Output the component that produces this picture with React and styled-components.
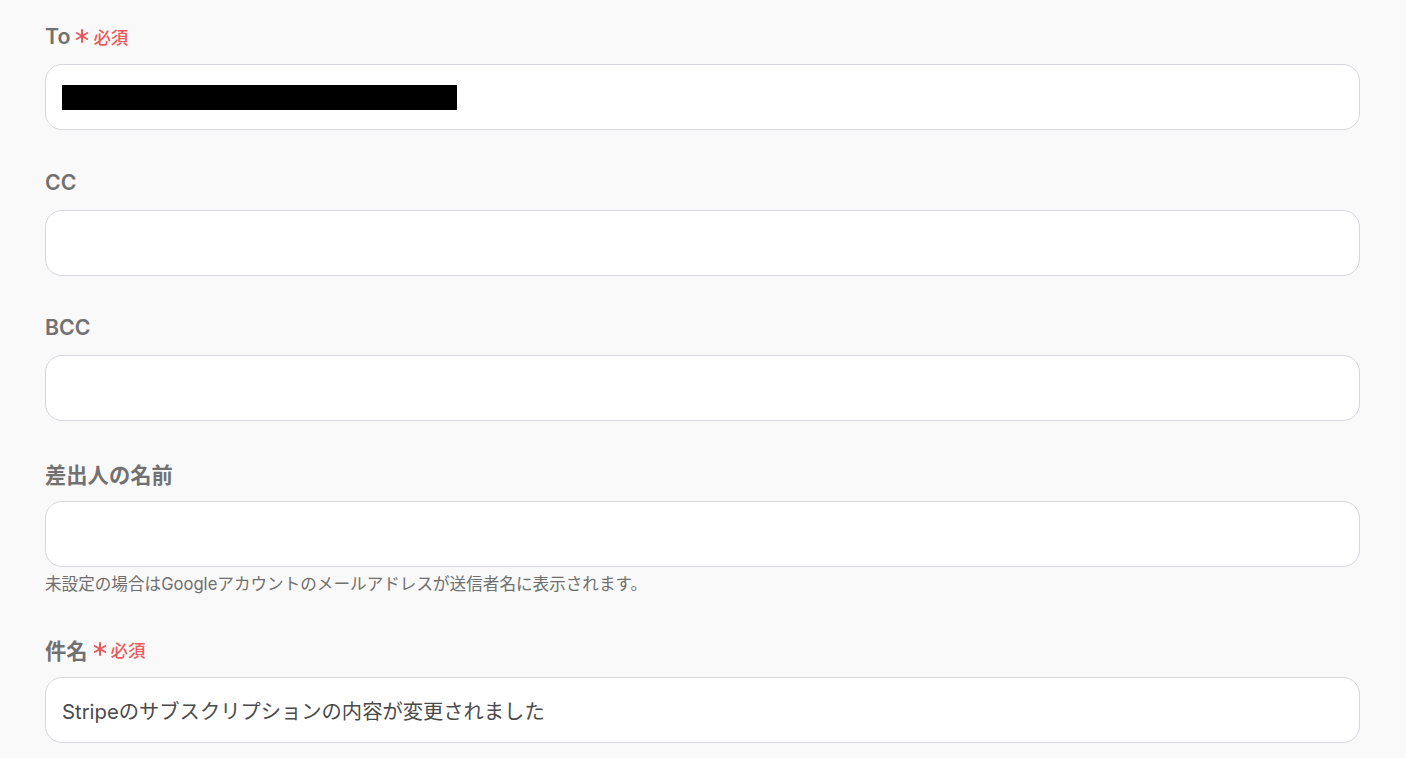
import React from 'react';
import styled, { createGlobalStyle } from 'styled-components';

const GlobalStyle = createGlobalStyle`
  html, body {
    margin: 0;
    padding: 0;
    background: #f9f9f9;
  }
  body {
    font-family: "Inter", "Noto Sans CJK JP", sans-serif;
  }
`;

const Page = styled.div`
  padding: 25px 46px 0 45px;
  display: flex;
  flex-direction: column;
`;

const Field = styled.div`
  display: flex;
  flex-direction: column;
  margin-bottom: ${(p) => p.$gap || 41}px;
`;

const Label = styled.div`
  display: flex;
  align-items: center;
  height: 22px;
  font-size: 21.3px;
  font-weight: 600;
  color: #717171;
  margin-bottom: 17px;
`;

const Required = styled.span`
  display: inline-flex;
  align-items: center;
  margin-left: 5px;
  color: #ea5a5e;
  font-size: 17.5px;
  font-weight: 500;
  gap: 4px;
`;

const Input = styled.div`
  box-sizing: border-box;
  height: 66px;
  background: #fff;
  border: 1px solid #d4d7dd;
  border-radius: 17px;
  padding: 0 16px;
  display: flex;
  align-items: center;
  font-size: 20.3px;
  color: #4a4a4a;
`;

const Redacted = styled.span`
  display: block;
  width: 395px;
  height: 25px;
  background: #000;
`;

const Help = styled.div`
  margin-top: 6px;
  font-size: 16.6px;
  line-height: 22px;
  color: #6f6f6f;
`;

const Star = () => (
  <svg width="14" height="14" viewBox="0 0 14 14">
    <g stroke="#ea5a5e" strokeWidth="2" strokeLinecap="round">
      <line x1="7" y1="1" x2="7" y2="13" />
      <line x1="1.8" y1="4" x2="12.2" y2="10" />
      <line x1="1.8" y1="10" x2="12.2" y2="4" />
    </g>
  </svg>
);

const FieldLabel = ({ text, required }) => (
  <Label>
    {text}
    {required && (
      <Required>
        <Star />
        必須
      </Required>
    )}
  </Label>
);

export default function App() {
  return (
    <>
      <GlobalStyle />
      <Page>
        <Field>
          <FieldLabel text="To" required />
          <Input>
            <Redacted />
          </Input>
        </Field>
        <Field $gap={40}>
          <FieldLabel text="CC" />
          <Input />
        </Field>
        <Field>
          <FieldLabel text="BCC" />
          <Input />
        </Field>
        <Field $gap={43}>
          <FieldLabel text="差出人の名前" />
          <Input />
          <Help>未設定の場合はGoogleアカウントのメールアドレスが送信者名に表示されます。</Help>
        </Field>
        <Field>
          <FieldLabel text="件名" required />
          <Input>Stripeのサブスクリプションの内容が変更されました</Input>
        </Field>
      </Page>
    </>
  );
}
